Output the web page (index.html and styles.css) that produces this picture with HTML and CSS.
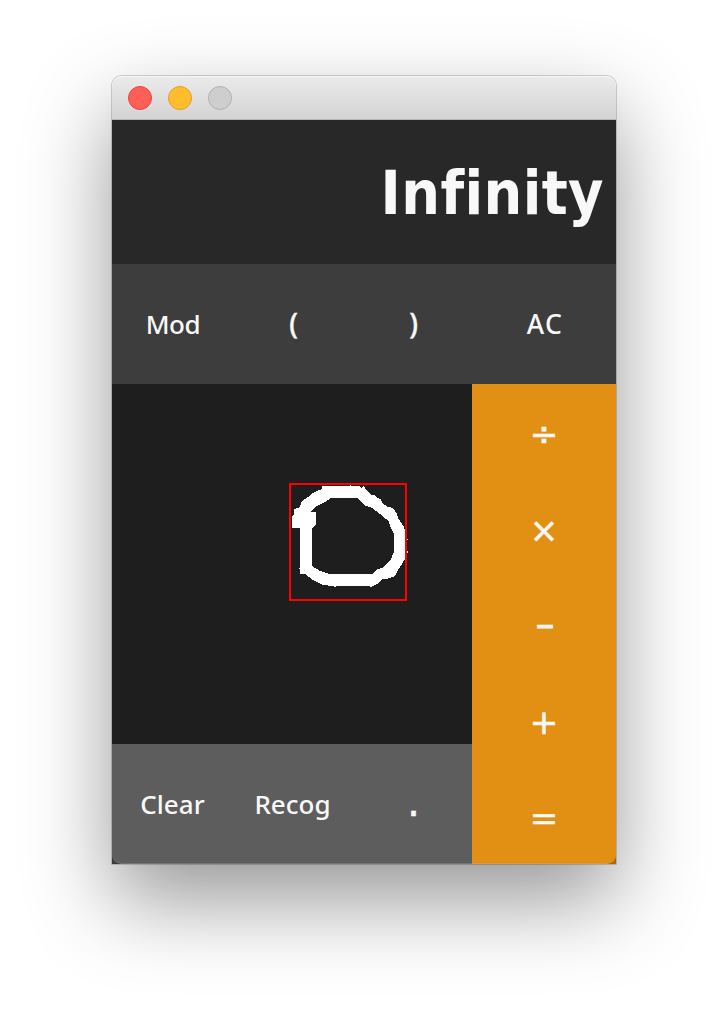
FILE: index.html
```html
<!DOCTYPE html>
<html lang="en">
<head>
<meta charset="utf-8">
<title>Calculator</title>
<link rel="stylesheet" href="styles.css">
</head>
<body>
<main class="window">
  <header class="titlebar">
    <span class="light close"></span>
    <span class="light minimize"></span>
    <span class="light disabled"></span>
  </header>
  <div class="display"><span class="result">Infinity</span></div>
  <div class="functions">
    <span class="key mod">Mod</span>
    <span class="key paren">(</span>
    <span class="key paren">)</span>
    <span class="key ac">AC</span>
  </div>
  <div class="body">
    <div class="left">
      <div class="canvas">
        <svg class="ink" width="360" height="360" viewBox="112 384 360 360">
          <path fill="#fff" fill-rule="evenodd" shape-rendering="crispEdges" d="M322 486L327 485.500L330 486.500L349 486L351 485L352 486.500L359 486L361 488L363 486L365 488L368 492L371 495L375 495L377 498L381 499L382 503L388 507L393 508L397 514L398 518L404 527L405 531L406 553L405 559L400 567L398 570L395 576L387 579L383 579L377 584L371 587L369 586L336 586L335 587L332 586L323 585L313 580L305 574L300 573.500L300 570L299 569L300 567L300 528L292 528L292 521L291.500 517L294 514L294 509L300 507L302 501L308 497L313 493L319 490L322 489ZM331 498L325 502L315 507L311 512L316 512L316 524L312 528L312 566L320 571L329 574L372 574L378 569L384 567L388 562L391 559L394 552L394 534L391 528L388 520L384 518L380 514L372 508L366 506L362 503L359 499L356 498Z"/>
          <path fill="#fff" d="M407 539h1v1h-1zM407 551h1v2h-1z"/>
          <rect x="290" y="484" width="116" height="116" fill="none" stroke="#f00" stroke-width="2"/>
        </svg>
      </div>
      <div class="actions">
        <span class="key clear">Clear</span>
        <span class="key recog">Recog</span>
        <span class="key dot">.</span>
      </div>
    </div>
    <div class="operators">
      <span class="op">÷</span>
      <span class="op">×</span>
      <span class="op minus">–</span>
      <span class="op">+</span>
      <span class="op">=</span>
    </div>
  </div>
</main>
</body>
</html>
```
FILE: styles.css
```css
* { box-sizing: border-box; }
body { margin: 0; background: #fff; padding: 76px 112px 0; width: 728px; height: 1012px; overflow: hidden; font-family: "Noto Sans", "Open Sans", sans-serif; color: #f8f8f8; }
.window { width: 504px; height: 788px; border-radius: 10px 10px 0 0; box-shadow: 0 0 0 1px rgba(0,0,0,.17), 0 36px 86px rgba(0,0,0,.41); }
.titlebar { height: 44px; display: flex; align-items: center; gap: 16px; padding-left: 16px; border-radius: 10px 10px 0 0; background: linear-gradient(#ebebeb, #d3d3d3); border-bottom: 1px solid #b5b5b5; box-shadow: inset 0 1px #f6f6f6; }
.light { width: 24px; height: 24px; border-radius: 50%; border: 1px solid; }
.close { background: #ff5f57; border-color: #e2453f; }
.minimize { background: #ffbd2e; border-color: #dfa023; }
.disabled { background: #cecece; border-color: #b1b1b1; }
.display { height: 144px; background: #282828; display: flex; align-items: center; justify-content: flex-end; padding: 2px 12px 0 0; }
.result { font-family: "DejaVu Sans Condensed", "DejaVu Sans", sans-serif; font-stretch: condensed; font-size: 60.500px; font-weight: 700; line-height: 142px; letter-spacing: .4px; font-variant-ligatures: none; }
.functions { height: 120px; background: #3d3d3d; display: grid; grid-template-columns: 120px 120px 120px 144px; }
.key { line-height: 120px; text-align: center; font-size: 26px; font-weight: 500; white-space: nowrap; padding-left: 1px; }
.ac { font-size: 26.500px; letter-spacing: 1.500px; padding-left: 2px; }
.mod { letter-spacing: -.4px; padding-left: 2px; }
.paren { font-weight: 500; font-size: 28px; line-height: 118px; padding-left: 3px; -webkit-text-stroke: .4px; }
.body { display: flex; }
.canvas { width: 360px; height: 360px; background: #1e1e1e; }
.ink { display: block; }
.left { background: #3d3d3d; }
.actions { height: 120px; background: #5d5d5d; display: grid; grid-template-columns: repeat(3, 120px); border-bottom-left-radius: 10px; box-shadow: inset 0 -1px #737373; }
.dot { font-family: "DejaVu Sans", sans-serif; font-weight: 400; font-size: 41px; line-height: 116px; padding-left: 3px; -webkit-text-stroke: .5px; }
.operators { width: 144px; height: 480px; background: linear-gradient(#e29013, #e29013) 0 0 / 100% 400px no-repeat, radial-gradient(circle at 134px 470px, #e29013 10px, #b5720e 11px); display: grid; grid-template-rows: repeat(5, 96px); background: #e29013; border-bottom-right-radius: 10px; box-shadow: inset 0 -1px #d49a48; }
.body { background: linear-gradient(90deg, #3d3d3d 50%, #ad6b0a 50%); }
.op { font-family: "DejaVu Sans", sans-serif; line-height: 100px; height: 96px; text-align: center; font-size: 34px; -webkit-text-stroke: .6px; }
.minus { padding-left: 2px; font-size: 37px; line-height: 97px; -webkit-text-stroke: 1px; }
```
